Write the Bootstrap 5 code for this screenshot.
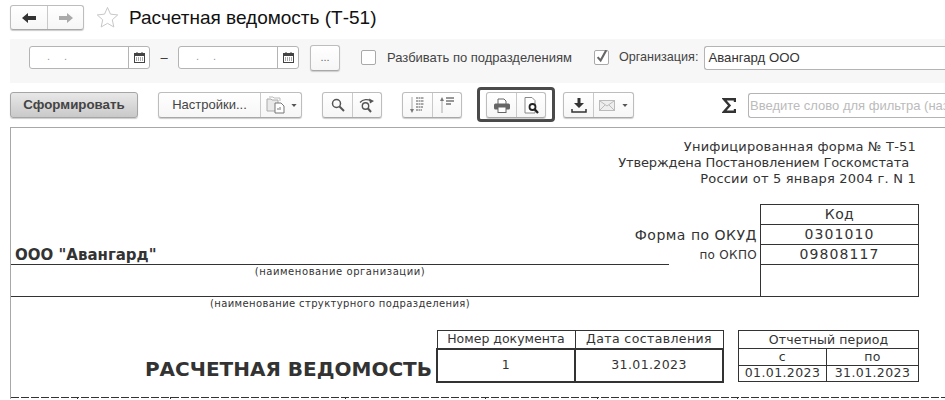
<!DOCTYPE html>
<html lang="ru"><head><meta charset="utf-8"><title>Расчетная ведомость</title>
<link href="https://cdn.jsdelivr.net/npm/bootstrap@5.3.0/dist/css/bootstrap.min.css" rel="stylesheet">
<style>
html,body{height:400px;overflow:hidden;background:#fff}
body{font-family:"Liberation Sans",Arial,sans-serif;font-size:13px;color:#333;width:945px}
.pg{padding:5px 0 0 10px;width:945px}
.ui-g{display:inline-flex;height:26px;border:1px solid #bdbdbd;border-bottom-color:#a8a8a8;border-radius:3px;background:linear-gradient(#fff,#f6f6f6);box-shadow:0 1px 1px #ccc;flex:none}
.ui-b{display:flex;align-items:center;justify-content:center;height:100%;padding:0;border:0;background:none;color:#444;font-size:13px;border-radius:0;flex:none}
.ui-b+.ui-b{border-left:1px solid #c9c9c9}
.w30{width:29px}
.nav-g{height:25px}
.ttl{font-size:19px;color:#111;margin:1px 0 0 10px;font-weight:400;line-height:24px}
.star{margin-left:12px}
.fp{background:#f7f7f7;height:44px;margin-top:9px;padding:0 0 7px 19px}
.dt{width:121px;height:23px;border:1px solid #b4b4b4;border-radius:3px;background:#fff;display:flex;flex:none}
.dt-t{flex:1;font-size:11px;line-height:18px;padding-left:17px;color:#999;word-spacing:11px}
.dt-c{width:21px;border-left:1px solid #b4b4b4;display:flex;align-items:center;justify-content:center}
.dash{width:28px;text-align:center;flex:none;color:#333}
.dots{width:30px;height:26px;margin-left:11px;color:#666;font-size:11px}
.cb{width:15px;height:15px;border:1px solid #a9a9a9;border-radius:2px;background:#fff;flex:none;display:flex;align-items:center;justify-content:center}
.lb{font-size:13px;color:#444;white-space:nowrap}
.lb2{font-size:12.6px}
.orgi{flex:1;height:24px;border:1px solid #b4b4b4;border-right:0;border-radius:3px 0 0 3px;background:#fff;padding-left:3px;line-height:22px;color:#333;font-size:13.2px;margin-left:6px}
.tb{height:26px;margin-top:9px;position:relative}
.gen{width:128px;background:linear-gradient(#e8e8e8,#c9c9c9);border-color:#a5a5a5;font-weight:700;font-size:13.300px;color:#444;justify-content:center;align-items:center}
.fi{width:197px;height:25px;border:1px solid #b4b4b4;border-right:0;border-radius:3px 0 0 3px;background:#fff;color:#bbb;font-size:13px;line-height:23px;padding-left:1px;white-space:nowrap;overflow:hidden;flex:none;margin-left:12px}
.hl{border:3px solid #4a4a4a;border-radius:4px;padding:2px 3px;margin:-5px 0 -4px 15px;height:35px;width:78px;display:flex;flex:none;justify-content:center;background:#fff}
.sig{margin-left:88px;flex:none;display:block}
.rp{margin-top:9px;border-top:1px solid #a8a8a8;border-left:1px solid #a8a8a8;height:272px;font-family:"DejaVu Sans",Verdana,sans-serif;color:#333;overflow:hidden;padding-top:11px}
.hd{text-align:right;font-size:13px;line-height:16px;width:905px;letter-spacing:.2px;white-space:pre}
.hd2{letter-spacing:-.12px;padding-right:3px}
.gr{display:grid;grid-template-columns:658px 91px 159px;grid-template-rows:20px 20px 20px 32px;margin-top:18px;width:908px}
.gc{border:1px solid #333;border-top:0;text-align:center;font-size:14px;line-height:19px;letter-spacing:1.100px}
.gc1{border-top:1px solid #333;margin-top:-1px;letter-spacing:.4px}
.gl{display:flex;justify-content:flex-end;padding-right:3px;white-space:nowrap;line-height:21px;font-size:14px;letter-spacing:.5px}
.gl2{font-size:12px;grid-column:2;grid-row:3;letter-spacing:.3px}
.org{grid-column:1 / span 2;grid-row:3;font-weight:700;font-size:15px;line-height:19px;padding-left:4px;position:relative;align-self:end}
.ln{grid-column:1;grid-row:3;border-bottom:1px solid #333}
.sub{grid-column:1;grid-row:4;font-size:10px;text-align:center;line-height:14px;letter-spacing:.57px;border-bottom:1px solid #333}
.gr .s3{grid-column:2;grid-row:4;border-bottom:1px solid #333}
.sub2{font-size:10px;text-align:center;line-height:14px;letter-spacing:.37px;width:658px}
.dr{display:flex;align-items:flex-start;margin-top:19px;height:52px}
.big{width:421px;text-align:right;font-weight:700;font-size:20px;line-height:26px;margin-top:26px;flex:none;white-space:nowrap}
table.rt{border-collapse:collapse;font-size:12.5px;text-align:center;letter-spacing:.4px;flex:none}
table.rt td{border:1px solid #333;padding:0;white-space:nowrap}
table.rt td.tight{letter-spacing:0}
table.rt td.tight2{letter-spacing:.1px}
.t1{margin-left:4px;width:288px}
.t1 tr:first-child td{height:18px;line-height:16px}
.t1 tr:last-child td{height:33px;border-width:2px;line-height:28px}
.t2{margin-left:14px;width:181px}
.t2 td{height:16.5px;line-height:14px}
.t2 tr:first-child td{height:18px}
.dsh{margin-top:15px;height:2px;width:934px;background:linear-gradient(#333,#333) 66px 0/1px 2px no-repeat,linear-gradient(#333,#333) 159px 0/1px 2px no-repeat,linear-gradient(#333,#333) 334px 0/1px 2px no-repeat,linear-gradient(#333,#333) 474px 0/1px 2px no-repeat,linear-gradient(#333,#333) 586px 0/1px 2px no-repeat,linear-gradient(#333,#333) 726px 0/1px 2px no-repeat,repeating-linear-gradient(90deg,#333 0 8px,transparent 8px 10px) 0 0/100% 1px no-repeat}
</style></head><body><div class="pg">
<div class="d-flex align-items-center" style="height:25px">
 <div class="ui-g nav-g">
  <button class="ui-b" style="width:36px"><svg width="14" height="10" viewBox="0 0 14 10"><path d="M0 5 6 0v3h8v4H6v3z" fill="#333"/></svg></button>
  <button class="ui-b" style="width:36px"><svg width="14" height="10" viewBox="0 0 14 10"><path d="M14 5 8 0v3H0v4h8v3z" fill="#aaa"/></svg></button>
 </div>
 <svg class="star" width="23" height="23" viewBox="0 0 24 24"><path d="M12 1.5l3.1 7 7.6.8-5.700 5.100 1.600 7.500L12 18.100 5.400 21.900l1.600-7.500L1.300 9.300l7.600-.8z" fill="#fff" stroke="#c4c4c4"/></svg>
 <h1 class="ttl">Расчетная ведомость (Т-51)</h1>
</div>
<div class="fp d-flex align-items-center">
 <div class="dt"><div class="dt-t">. .</div><div class="dt-c"><svg width="11" height="11" viewBox="0 0 11 11"><rect x=".5" y="1.500" width="10" height="9" fill="#fff" stroke="#444"/><rect x="0" y="1" width="11" height="3" fill="#444"/><path d="M2 6h7M2 8h7" stroke="#555" stroke-dasharray="1 1"/><path d="M3 0v2M8 0v2" stroke="#444"/></svg></div></div>
 <div class="dash">–</div>
 <div class="dt"><div class="dt-t">. .</div><div class="dt-c"><svg width="11" height="11" viewBox="0 0 11 11"><rect x=".5" y="1.500" width="10" height="9" fill="#fff" stroke="#444"/><rect x="0" y="1" width="11" height="3" fill="#444"/><path d="M2 6h7M2 8h7" stroke="#555" stroke-dasharray="1 1"/><path d="M3 0v2M8 0v2" stroke="#444"/></svg></div></div>
 <div class="ui-g dots"><button class="ui-b w-100" style="font-size:11px;color:#666">...</button></div>
 <div class="cb" style="margin-left:21px"></div>
 <span class="lb" style="margin-left:11px">Разбивать по подразделениям</span>
 <div class="cb" style="margin-left:22px"><svg width="15" height="15" viewBox="0 0 15 15"><path d="M3 7l3.500 4L13-1" fill="none" stroke="#666" stroke-width="2.400"/></svg></div>
 <span class="lb lb2" style="margin-left:10px">Организация:</span>
 <div class="orgi">Авангард ООО</div>
</div>
<div class="tb d-flex align-items-center">
 <div class="ui-g gen"><span>Сформировать</span></div>
 <div class="ui-g" style="margin-left:20px">
  <button class="ui-b" style="width:101px">Настройки...</button>
  <button class="ui-b" style="width:41px;gap:5px"><svg width="20" height="18" viewBox="0 0 20 18"><path d="M1 3h4l1 1h6v11H1z" fill="#e9e9e9" stroke="#aaa"/><path d="M3 1h4l1 1h6v3" fill="none" stroke="#bbb"/><path d="M9 7h6l3 3v7H9z" fill="#fff" stroke="#777"/><path d="M12 14v-2M14 14v-3" stroke="#777"/></svg><svg width="6" height="3" viewBox="0 0 7 4"><path d="M0 0h7L3.500 4z" fill="#555"/></svg></button>
 </div>
 <div class="ui-g" style="margin-left:20px">
  <button class="ui-b w30"><svg width="14" height="14" viewBox="0 0 14 14"><circle cx="5.500" cy="5.500" r="4" fill="none" stroke="#555" stroke-width="1.500"/><path d="M8.500 8.500 13 13" stroke="#555" stroke-width="2"/></svg></button>
  <button class="ui-b w30"><svg width="16" height="15" viewBox="0 0 16 15"><circle cx="6.500" cy="8" r="3.200" fill="none" stroke="#555" stroke-width="1.400"/><path d="M9 10.500 12 14" stroke="#555" stroke-width="2"/><path d="M1 4.500C4 1 9 1 12 3" fill="none" stroke="#555" stroke-width="1.300"/><path d="M10 .5 15 3l-4 2.500z" fill="#555"/></svg></button>
 </div>
 <div class="ui-g" style="margin-left:20px">
  <button class="ui-b w30"><svg width="17" height="18" viewBox="0 0 17 18"><path d="M3 1v14" stroke="#aaa"/><path d="M1 13h4l-2 4z" fill="#777"/><path d="M7 2h8M7 5h8M7 8h8M7 11h7M7 14h6" stroke="#555" stroke-dasharray="2 .5"/></svg></button>
  <button class="ui-b w30"><svg width="17" height="18" viewBox="0 0 17 18"><path d="M3 3v14" stroke="#aaa"/><path d="M1 5h4L3 1z" fill="#777"/><path d="M7 2h8M7 5h8M7 8h5" stroke="#333" stroke-width="1.200"/></svg></button>
 </div>
 <div class="hl"><div class="ui-g">
  <button class="ui-b w30"><svg width="16" height="15" viewBox="0 0 16 15"><path d="M4 6V1h6l2 2v3" fill="#fff" stroke="#666"/><rect x="0" y="5.500" width="16" height="6" rx="1.500" fill="#666"/><rect x="4" y="9" width="8" height="5.500" fill="#fff" stroke="#666"/></svg></button>
  <button class="ui-b w30"><svg width="15" height="17" viewBox="0 0 15 17"><path d="M1 .5h7l3 3V16H1z" fill="#fff" stroke="#888"/><circle cx="8.500" cy="10" r="3" fill="#fff" stroke="#222" stroke-width="1.800"/><path d="M10.500 12l3.500 4" stroke="#222" stroke-width="2.200"/></svg></button>
 </div></div>
 <div class="ui-g" style="margin-left:8px">
  <button class="ui-b w30"><svg width="16" height="15" viewBox="0 0 16 15"><path d="M6.500 0h3v5H13L8 10 3 5h3.500z" fill="#333"/><path d="M1 11v3h14v-3" fill="none" stroke="#333" stroke-width="1.500"/></svg></button>
  <button class="ui-b" style="width:40px;gap:7px"><svg width="16" height="11" viewBox="0 0 16 11"><rect x=".5" y=".5" width="15" height="10" fill="#eee" stroke="#bbb"/><path d="M1 1l7 5 7-5M1 10l5-5M15 10l-5-5" fill="none" stroke="#bbb"/></svg><svg width="6" height="3" viewBox="0 0 7 4"><path d="M0 0h7L3.500 4z" fill="#555"/></svg></button>
 </div>
 <svg class="sig" width="14" height="15" viewBox="0 0 14 15"><path d="M13 4V1.300H2L7.500 7.500 2 13.700h11V11" fill="none" stroke="#333" stroke-width="2.400"/></svg>
 <div class="fi">Введите слово для фильтра (наз</div>
</div>
<div class="rp">
 <div class="hd">Унифицированная форма № Т-51
<span class="hd2">Утверждена Постановлением Госкомстата </span>
России от 5 января 2004 г. N 1</div>
 <div class="gr">
  <div></div><div></div><div class="gc gc1">Код</div>
  <div></div><div class="gl">Форма по ОКУД</div><div class="gc">0301010</div>
  <div class="ln"></div><div class="org">ООО "Авангард"</div><div class="gl gl2">по ОКПО</div><div class="gc" style="grid-column:3;grid-row:3">09808117</div>
  <div class="sub">(наименование организации)</div><div class="s3"></div><div class="gc" style="grid-column:3;grid-row:4"></div>
 </div>
 <div class="sub2">(наименование структурного подразделения)</div>
 <div class="dr">
  <div class="big">РАСЧЕТНАЯ ВЕДОМОСТЬ</div>
  <table class="rt t1"><tbody><tr><td class="tight" style="width:138px">Номер документа</td><td>Дата составления</td></tr><tr><td>1</td><td>31.01.2023</td></tr></tbody></table>
  <table class="rt t2"><tbody><tr><td class="tight2" colspan="2">Отчетный период</td></tr><tr><td style="width:88px">с</td><td>по</td></tr><tr><td>01.01.2023</td><td>31.01.2023</td></tr></tbody></table>
 </div>
 <div class="dsh"></div>
</div>
</div>
<script src="https://cdn.jsdelivr.net/npm/bootstrap@5.3.0/dist/js/bootstrap.bundle.min.js"></script>
</body></html>
